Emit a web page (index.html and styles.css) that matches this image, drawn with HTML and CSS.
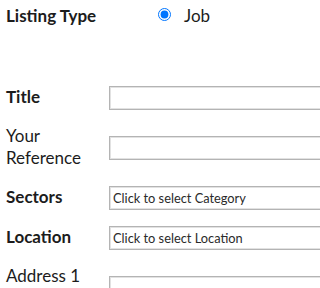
FILE: index.html
```html
<!DOCTYPE html>
<html>
<head>
<meta charset="utf-8">
<link rel="stylesheet" href="styles.css">
</head>
<body>
<form class="form">
  <div class="row row-type">
    <span class="label req">Listing Type</span>
    <label class="choice"><input type="radio" name="type" checked><span>Job</span></label>
  </div>
  <div class="row">
    <span class="label req">Title</span>
    <input class="field" type="text">
  </div>
  <div class="row">
    <span class="label">Your Reference</span>
    <input class="field" type="text">
  </div>
  <div class="row">
    <span class="label req">Sectors</span>
    <input class="field" type="text" value="Click to select Category" readonly>
  </div>
  <div class="row">
    <span class="label req">Location</span>
    <input class="field" type="text" value="Click to select Location" readonly>
  </div>
  <div class="row">
    <span class="label tall">Address 1</span>
    <input class="field" type="text">
  </div>
</form>
</body>
</html>
```
FILE: styles.css
```css
html, body {
  margin: 0;
  background: #ffffff;
  overflow: hidden;
}
body {
  font-family: Lato, "Liberation Sans", sans-serif;
  color: #1c1c1c;
  font-size: 17px;
  line-height: 22px;
}
.form {
  padding: 5px 0 0 6px;
  overflow: hidden;
  height: 288px;
  box-sizing: border-box;
}
.row {
  display: grid;
  grid-template-columns: 103px 400px;
  align-items: center;
  padding: 8px 0;
}
.row-type {
  padding: 0;
  margin-bottom: 50.5px;
  grid-template-columns: 152px auto;
}
.label {
  max-width: 95px;
  position: relative;
  top: -1px;
}
.label.req {
  font-weight: 700;
  max-width: none;
}
.row-type .label {
  top: 0;
}
.label.tall {
  min-height: 44px;
}
.choice {
  display: flex;
  align-items: center;
  gap: 13px;
}
.choice input {
  margin: 0 0 3px 0;
  width: 13px;
  height: 13px;
}
.field {
  box-sizing: border-box;
  height: 24px;
  width: 400px;
  margin: 0;
  padding: 0 3px;
  border: 1px solid #b4b4b4;
  box-shadow: inset 0 0 0 1px #e2e2e2;
  border-radius: 0;
  background: #fff;
  font-family: Lato, "Liberation Sans", sans-serif;
  font-size: 12.8px;
  color: #2a2a2a;
  outline: none;
}
```
